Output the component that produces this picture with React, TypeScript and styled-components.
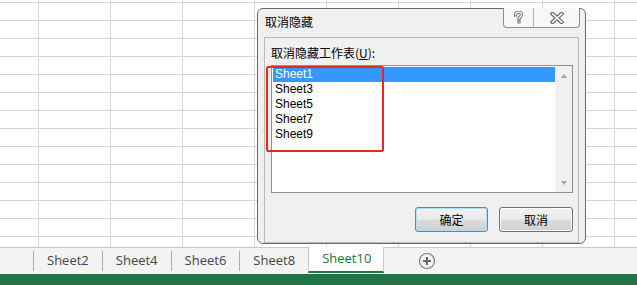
import React from "react";
import styled, { createGlobalStyle } from "styled-components";

const Global = createGlobalStyle`
  html, body { margin: 0; padding: 0; background: #fff; overflow: hidden; }
  body { font-family: "Noto Sans", "Noto Sans CJK SC", sans-serif; }
`;

const Page = styled.div`
  width: 637px;
  height: 285px;
  display: flex;
  flex-direction: column;
`;

const Sheet = styled.div`
  position: relative;
  height: 247px;
  flex: none;
  background-color: #fff;
  background-image: linear-gradient(to right, #d4d4d4 1px, transparent 1px),
    linear-gradient(to bottom, #d4d4d4 1px, transparent 1px);
  background-size: 72px 100%, 100% 18px;
  background-position: 38px 0, 0 2px;
`;

const Dialog = styled.div`
  position: absolute;
  left: 257px;
  top: 8px;
  width: 327px;
  height: 234px;
  border: 1px solid #6a6a6a;
  border-radius: 6px;
  background: #f0f0f0;
  display: flex;
  flex-direction: column;
`;

const TitleBar = styled.div`
  height: 28px;
  display: flex;
  align-items: flex-start;
  justify-content: space-between;
  padding: 0 5px 0 7px;
  flex: none;
`;

const Title = styled.div`
  font-family: "Noto Sans CJK SC", sans-serif;
  font-size: 12px;
  line-height: 14px;
  margin-top: 6px;
  color: #000;
`;

const CaptionGroup = styled.div`
  display: flex;
  margin-top: -1px;
  border: 1px solid #8e8e8e;
  border-top: none;
  border-radius: 0 0 4px 4px;
  background: #f7f7f7;
  height: 19px;
  overflow: hidden;
`;

const CaptionButton = styled.div<{ $w: number; $divider?: boolean }>`
  width: ${(p) => p.$w}px;
  height: 19px;
  display: flex;
  align-items: center;
  justify-content: center;
  border-right: ${(p) => (p.$divider ? "1px solid #b5b5b5" : "none")};
`;

const Client = styled.div`
  flex: 1;
  margin: 0 6px 5px 6px;
  border: 1px solid #b9b9b9;
  padding: 7px 5px 10px 6px;
  display: flex;
  flex-direction: column;
`;

const Label = styled.div`
  font-family: "Noto Sans CJK SC", sans-serif;
  font-size: 12px;
  line-height: 16px;
  height: 16px;
  color: #000;
  margin-bottom: 4px;
  u { text-decoration: underline; text-underline-offset: 1px; }
`;

const ListWrap = styled.div`
  position: relative;
  height: 124px;
  display: flex;
  border: 1px solid #8e8f8f;
  background: #fff;
  padding: 1px 0 1px 1px;
`;

const Items = styled.div`
  flex: 1;
  display: flex;
  flex-direction: column;
`;

const Item = styled.div<{ $selected?: boolean }>`
  height: 15px;
  line-height: 15px;
  font-family: "Liberation Sans", "Noto Sans CJK SC", sans-serif;
  font-size: 12px;
  padding-left: 2px;
  color: ${(p) => (p.$selected ? "#fff" : "#000")};
  background: ${(p) => (p.$selected ? "#3399ff" : "transparent")};
`;

const ScrollBar = styled.div`
  width: 16px;
  margin: -1px 0 -1px 0;
  background: #f0f0f0;
  border-left: 1px solid #f7f7f7;
  display: flex;
  flex-direction: column;
  justify-content: space-between;
  align-items: center;
  padding: 8px 0 7px;
`;

const Arrow = styled.div<{ $down?: boolean }>`
  width: 0;
  height: 0;
  border-left: 3.5px solid transparent;
  border-right: 3.5px solid transparent;
  ${(p) =>
    p.$down
      ? "border-top: 4px solid #a3a3a3;"
      : "border-bottom: 4px solid #a3a3a3;"}
`;

const Highlight = styled.div`
  position: absolute;
  left: -6px;
  top: 0px;
  width: 114px;
  height: 82px;
  border: 2px solid #f0251d;
  border-radius: 2px;
  pointer-events: none;
`;

const Buttons = styled.div`
  margin-top: 14px;
  display: flex;
  justify-content: flex-end;
  gap: 11px;
`;

const Button = styled.div<{ $default?: boolean }>`
  width: ${(p) => (p.$default ? 71 : 72)}px;
  height: 23px;
  border: 1px solid ${(p) => (p.$default ? "#3c8fd0" : "#707070")};
  border-radius: 3px;
  background: linear-gradient(#f2f2f2 0%, #ebebeb 48%, #dddddd 52%, #cfcfcf 100%);
  box-shadow: ${(p) =>
    p.$default ? "inset 0 0 0 1px #aee0f7" : "inset 0 0 0 1px #fcfcfc"};
  display: flex;
  align-items: center;
  justify-content: center;
  font-family: "Noto Sans CJK SC", sans-serif;
  font-size: 12px;
  color: #000;
`;

const TabBar = styled.div`
  height: 26px;
  flex: none;
  border-top: 1px solid #c8c8c8;
  background: #f3f3f3;
  display: flex;
  align-items: stretch;
  padding-left: 33px;
`;

const Tab = styled.div<{ $active?: boolean }>`
  position: relative;
  padding: 0 12px 2px 13px;
  font-family: "Open Sans", "Noto Sans", sans-serif;
  font-size: 13px;
  display: flex;
  align-items: center;
  color: ${(p) => (p.$active ? "#217346" : "#444")};
  background: ${(p) => (p.$active ? "#fff" : "transparent")};
  border-left: 1px solid ${(p) => (p.$active ? "#c8c8c8" : "transparent")};
  border-right: 1px solid ${(p) => (p.$active ? "#c8c8c8" : "transparent")};
  border-bottom: ${(p) => (p.$active ? "2px solid #217346" : "none")};
  margin-top: ${(p) => (p.$active ? "-1px" : "0")};
  margin-bottom: ${(p) => (p.$active ? "1px" : "0")};
  &::before {
    content: "";
    display: ${(p) => (p.$active ? "none" : "block")};
    position: absolute;
    left: -1px;
    top: 3px;
    bottom: 3px;
    width: 1px;
    background: #ababab;
  }
`;

const AddButton = styled.div`
  margin-left: 34px;
  display: flex;
  align-items: center;
  padding-bottom: 1px;
`;

const StatusBar = styled.div`
  height: 11px;
  flex: none;
  background: #217346;
`;

const HelpIcon = () => (
  <svg width="11" height="13" viewBox="0 0 11 13">
    <path
      d="M2.5 4 C2.5 1.8 4 1.2 5.5 1.2 C7.2 1.2 8.5 2.2 8.5 3.8 C8.5 5.6 6 5.8 6 7.8"
      fill="none"
      stroke="#6e6e6e"
      strokeWidth="3.2"
      strokeLinecap="square"
    />
    <rect x="4.4" y="9.4" width="3.2" height="3" fill="#6e6e6e" />
    <path
      d="M2.5 4 C2.5 1.8 4 1.2 5.5 1.2 C7.2 1.2 8.5 2.2 8.5 3.8 C8.5 5.6 6 5.8 6 7.8"
      fill="none"
      stroke="#fff"
      strokeWidth="1.2"
      strokeLinecap="square"
    />
    <rect x="5.4" y="10.3" width="1.2" height="1.2" fill="#fff" />
  </svg>
);

const CloseIcon = () => (
  <svg width="14" height="12" viewBox="0 0 14 12">
    <path d="M2.5 1.8 L11.5 10.2 M11.5 1.8 L2.5 10.2" stroke="#6e6e6e" strokeWidth="4" strokeLinecap="square" />
    <path d="M2.5 1.8 L11.5 10.2 M11.5 1.8 L2.5 10.2" stroke="#fff" strokeWidth="1.6" strokeLinecap="square" />
  </svg>
);

const PlusIcon = () => (
  <svg width="18" height="18" viewBox="0 0 18 18">
    <circle cx="9" cy="9" r="7.5" fill="none" stroke="#7d7d7d" strokeWidth="1.2" />
    <path d="M9 5 V13 M5 9 H13" stroke="#666" strokeWidth="2" />
  </svg>
);

const sheetsHidden = ["Sheet1", "Sheet3", "Sheet5", "Sheet7", "Sheet9"];
const sheetTabs = ["Sheet2", "Sheet4", "Sheet6", "Sheet8"];

export default function App() {
  return (
    <Page>
      <Global />
      <Sheet>
        <Dialog>
          <TitleBar>
            <Title>取消隐藏</Title>
            <CaptionGroup>
              <CaptionButton $w={29} $divider>
                <HelpIcon />
              </CaptionButton>
              <CaptionButton $w={45}>
                <CloseIcon />
              </CaptionButton>
            </CaptionGroup>
          </TitleBar>
          <Client>
            <Label>
              取消隐藏工作表(<u>U</u>):
            </Label>
            <ListWrap>
              <Items>
                {sheetsHidden.map((s, i) => (
                  <Item key={s} $selected={i === 0}>
                    {s}
                  </Item>
                ))}
              </Items>
              <ScrollBar>
                <Arrow />
                <Arrow $down />
              </ScrollBar>
              <Highlight />
            </ListWrap>
            <Buttons>
              <Button $default>确定</Button>
              <Button>取消</Button>
            </Buttons>
          </Client>
        </Dialog>
      </Sheet>
      <TabBar>
        {sheetTabs.map((s) => (
          <Tab key={s}>{s}</Tab>
        ))}
        <Tab $active>Sheet10</Tab>
        <AddButton>
          <PlusIcon />
        </AddButton>
      </TabBar>
      <StatusBar />
    </Page>
  );
}
